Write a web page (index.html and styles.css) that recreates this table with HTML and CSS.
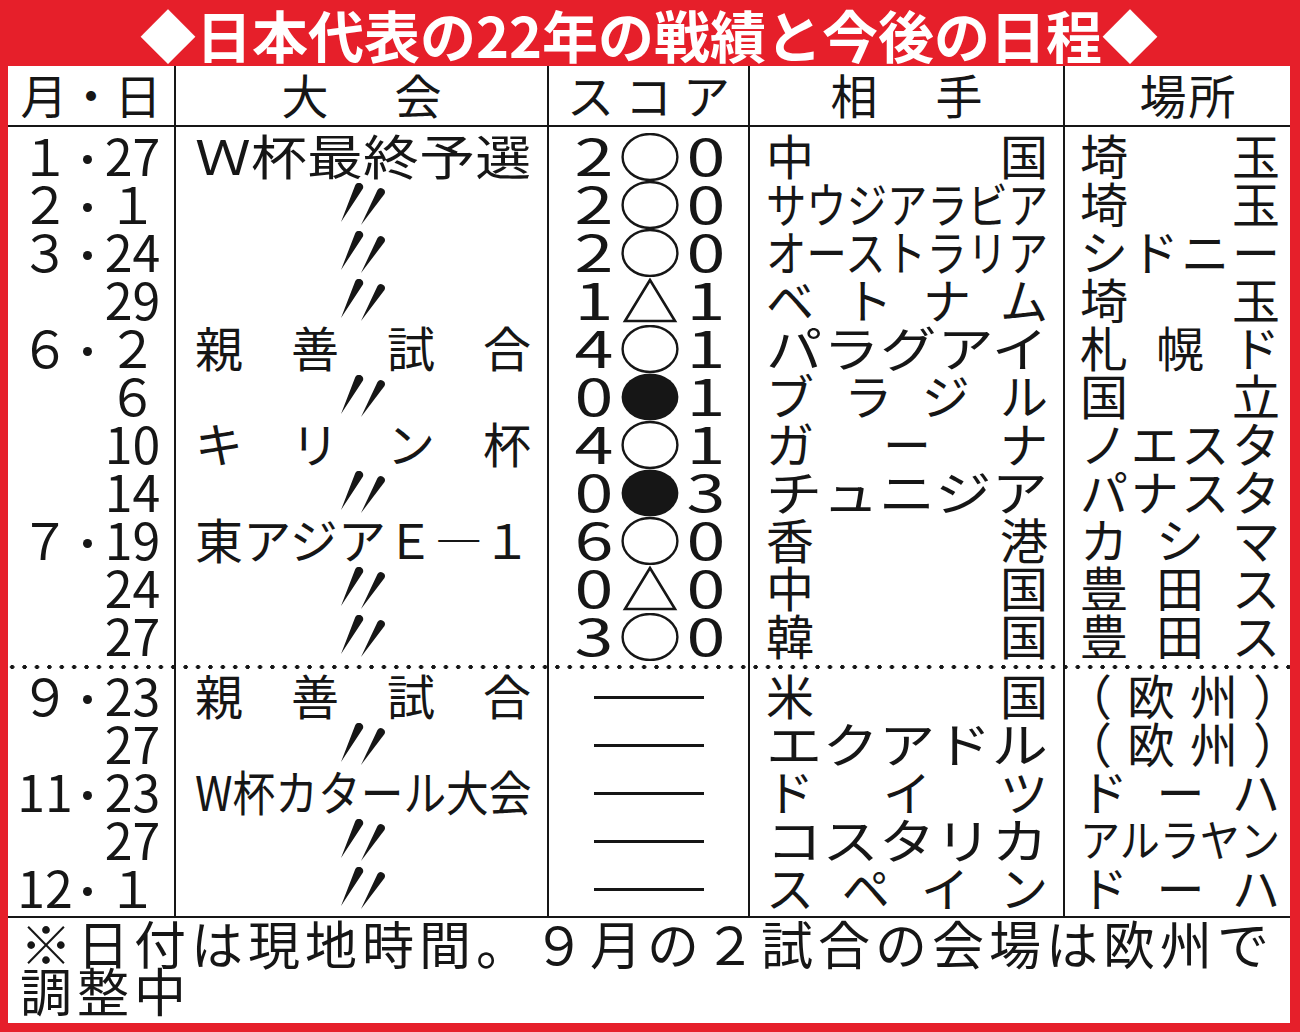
FILE: index.html
```html
<!DOCTYPE html>
<html lang="ja">
<head>
<meta charset="utf-8">
<title>日本代表の22年の戦績と今後の日程</title>
<link rel="stylesheet" href="styles.css">
</head>
<body>
<svg class="defs" aria-hidden="true">
  <symbol id="ditto" viewBox="0 0 50 44">
    <path d="M25.8 5.8 L4 39 L18.2 2.2 A4.1 4.1 0 0 1 25.8 5.8 Z"/>
    <path d="M47.5 11.1 L24 42 L40.5 6.9 A4.1 4.1 0 0 1 47.5 11.1 Z"/>
  </symbol>
  <symbol id="win" viewBox="0 0 62 48">
    <ellipse cx="31" cy="24" rx="27.4" ry="23" fill="none" stroke="#161616" stroke-width="2.4"/>
  </symbol>
  <symbol id="lose" viewBox="0 0 62 48">
    <ellipse cx="31" cy="24" rx="28.4" ry="23.6" fill="#161616"/>
  </symbol>
  <symbol id="draw" viewBox="0 0 62 48">
    <polygon points="31,3 6,44 56,44" fill="none" stroke="#161616" stroke-width="2.6"/>
  </symbol>
</svg>

<div class="frame">
  <h1 class="title">◆日本代表の22年の戦績と今後の日程◆</h1>
  <div class="sheet">
    <div class="cols head">
      <div class="h">月・日</div>
      <div class="h h-taikai">大会</div>
      <div class="h h-score">スコア</div>
      <div class="h h-aite">相手</div>
      <div class="h h-basho">場所</div>
    </div>

    <div class="cols blk blk1">
      <div class="col">
        <div class="c d"><span class="m">１</span><i class="pt"></i><span class="dd">27</span></div>
        <div class="c d"><span class="m">２</span><i class="pt"></i><span class="dd">１</span></div>
        <div class="c d"><span class="m">３</span><i class="pt"></i><span class="dd">24</span></div>
        <div class="c d"><span class="dd">29</span></div>
        <div class="c d"><span class="m">６</span><i class="pt"></i><span class="dd">２</span></div>
        <div class="c d"><span class="dd">６</span></div>
        <div class="c d"><span class="dd">10</span></div>
        <div class="c d"><span class="dd">14</span></div>
        <div class="c d"><span class="m">７</span><i class="pt"></i><span class="dd">19</span></div>
        <div class="c d"><span class="dd">24</span></div>
        <div class="c d"><span class="dd">27</span></div>
      </div>
      <div class="col tai">
        <div class="c j"><span class="fit k116">Ｗ杯最終予選</span></div>
        <div class="c dt"><svg><use href="#ditto"/></svg></div>
        <div class="c dt"><svg><use href="#ditto"/></svg></div>
        <div class="c dt"><svg><use href="#ditto"/></svg></div>
        <div class="c j">親善試合</div>
        <div class="c dt"><svg><use href="#ditto"/></svg></div>
        <div class="c j">キリン杯</div>
        <div class="c dt"><svg><use href="#ditto"/></svg></div>
        <div class="c j">東アジアＥ―１</div>
        <div class="c dt"><svg><use href="#ditto"/></svg></div>
        <div class="c dt"><svg><use href="#ditto"/></svg></div>
      </div>
      <div class="col">
        <div class="c s"><span class="n">2</span><svg><use href="#win"/></svg><span class="n">0</span></div>
        <div class="c s"><span class="n">2</span><svg><use href="#win"/></svg><span class="n">0</span></div>
        <div class="c s"><span class="n">2</span><svg><use href="#win"/></svg><span class="n">0</span></div>
        <div class="c s"><span class="n">1</span><svg><use href="#draw"/></svg><span class="n">1</span></div>
        <div class="c s"><span class="n">4</span><svg><use href="#win"/></svg><span class="n">1</span></div>
        <div class="c s"><span class="n">0</span><svg><use href="#lose"/></svg><span class="n">1</span></div>
        <div class="c s"><span class="n">4</span><svg><use href="#win"/></svg><span class="n">1</span></div>
        <div class="c s"><span class="n">0</span><svg><use href="#lose"/></svg><span class="n">3</span></div>
        <div class="c s"><span class="n">6</span><svg><use href="#win"/></svg><span class="n">0</span></div>
        <div class="c s"><span class="n">0</span><svg><use href="#draw"/></svg><span class="n">0</span></div>
        <div class="c s"><span class="n">3</span><svg><use href="#win"/></svg><span class="n">0</span></div>
      </div>
      <div class="col aite">
        <div class="c j">中国</div>
        <div class="c j"><span class="fit k84">サウジアラビア</span></div>
        <div class="c j"><span class="fit k84">オーストラリア</span></div>
        <div class="c j">ベトナム</div>
        <div class="c j"><span class="fit k117">パラグアイ</span></div>
        <div class="c j">ブラジル</div>
        <div class="c j">ガーナ</div>
        <div class="c j"><span class="fit k117">チュニジア</span></div>
        <div class="c j">香港</div>
        <div class="c j">中国</div>
        <div class="c j">韓国</div>
      </div>
      <div class="col basho">
        <div class="c j">埼玉</div>
        <div class="c j">埼玉</div>
        <div class="c j">シドニー</div>
        <div class="c j">埼玉</div>
        <div class="c j">札幌ド</div>
        <div class="c j">国立</div>
        <div class="c j">ノエスタ</div>
        <div class="c j">パナスタ</div>
        <div class="c j">カシマ</div>
        <div class="c j">豊田ス</div>
        <div class="c j">豊田ス</div>
      </div>
    </div>

    <div class="cols sep"><div></div><div></div><div></div><div></div><div></div></div>

    <div class="cols blk blk2">
      <div class="col">
        <div class="c d"><span class="m">９</span><i class="pt"></i><span class="dd">23</span></div>
        <div class="c d"><span class="dd">27</span></div>
        <div class="c d"><span class="m">11</span><i class="pt"></i><span class="dd">23</span></div>
        <div class="c d"><span class="dd">27</span></div>
        <div class="c d"><span class="m">12</span><i class="pt"></i><span class="dd">１</span></div>
      </div>
      <div class="col tai">
        <div class="c j">親善試合</div>
        <div class="c dt"><svg><use href="#ditto"/></svg></div>
        <div class="c j"><span class="fit k89">W杯カタール大会</span></div>
        <div class="c dt"><svg><use href="#ditto"/></svg></div>
        <div class="c dt"><svg><use href="#ditto"/></svg></div>
      </div>
      <div class="col">
        <div class="c s2"><span class="dash"></span></div>
        <div class="c s2"><span class="dash"></span></div>
        <div class="c s2"><span class="dash"></span></div>
        <div class="c s2"><span class="dash"></span></div>
        <div class="c s2"><span class="dash"></span></div>
      </div>
      <div class="col aite">
        <div class="c j">米国</div>
        <div class="c j"><span class="fit k117">エクアドル</span></div>
        <div class="c j">ドイツ</div>
        <div class="c j"><span class="fit k117">コスタリカ</span></div>
        <div class="c j">スペイン</div>
      </div>
      <div class="col basho">
        <div class="c spread"><span class="lp">（</span><span>欧</span><span>州</span><span class="rp">）</span></div>
        <div class="c spread"><span class="lp">（</span><span>欧</span><span>州</span><span class="rp">）</span></div>
        <div class="c j">ドーハ</div>
        <div class="c j small"><span class="fit k91">アルラヤン</span></div>
        <div class="c j">ドーハ</div>
      </div>
    </div>

    <p class="note">※日付は現地時間。９月の２試合の会場は欧州で<br>調整中</p>
  </div>
</div>
</body>
</html>
```

FILE: styles.css
```css
* {
  box-sizing: border-box;
  margin: 0;
  padding: 0;
}

html, body {
  width: 1300px;
  height: 1032px;
  overflow: hidden;
}

body {
  font-family: "Noto Sans CJK JP", "Noto Sans", sans-serif;
  color: #161616;
  background: #e61f2a;
}

.defs {
  display: block;
  width: 0;
  height: 0;
  overflow: hidden;
}

.frame {
  width: 1300px;
  height: 1032px;
  background: #e61f2a;
  padding: 0 10px 9px 8px;
  display: flex;
  flex-direction: column;
}

.title {
  height: 66px;
  padding-top: 2px;
  color: #fff;
  font-size: 56px;
  font-weight: 700;
  line-height: 64px;
  text-align: center;
  white-space: nowrap;
}

.sheet {
  flex: 1;
  background: #fff;
  display: flex;
  flex-direction: column;
}

.cols {
  display: grid;
  grid-template-columns: 168px 373px 201px 315px 225px;
}

.cols > * {
  border-right: 2px solid #161616;
}

.cols > *:last-child {
  border-right: 0;
}

/* header */
.head {
  height: 61px;
  border-bottom: 2px solid #161616;
}

.h {
  display: flex;
  align-items: center;
  justify-content: center;
  padding-bottom: 5px;
  font-size: 47px;
  line-height: 1;
  white-space: nowrap;
}

.h-taikai {
  letter-spacing: 66px;
  padding-left: 66px;
}

.h-aite {
  letter-spacing: 58px;
  padding-left: 58px;
}

.h-score {
  letter-spacing: 11px;
  padding-left: 11px;
}

.h-basho {
  padding-left: 22px;
  letter-spacing: 2px;
}

/* body blocks */
.blk1 .col {
  padding-top: 6px;
}

.blk2 {
  border-bottom: 2px solid #161616;
}

.blk2 .col {
  padding-bottom: 3px;
}

.c {
  height: 48px;
  font-size: 48px;
  line-height: 42px;
}

.tai .c {
  padding: 0 16px 0 19px;
}

.aite .c {
  padding: 0 15px 0 16px;
}

.basho .c {
  padding: 0 10px 0 15px;
}

.j {
  text-align: justify;
  text-align-last: justify;
}

.spread {
  display: flex;
  justify-content: space-between;
}

.lp {
  margin-left: -16px;
}

.rp {
  margin-right: -21px;
}

.fit {
  display: block;
  width: calc(100% / var(--k));
  transform: scaleX(var(--k));
  transform-origin: 0 50%;
  text-align: justify;
  text-align-last: justify;
  white-space: nowrap;
}

.k84 { --k: 0.84; }
.k89 { --k: 0.89; }
.k91 { --k: 0.91; }
.k116 { --k: 1.163; }
.k117 { --k: 1.17; }

.fit.k116, .fit.k117 {
  white-space: normal;
}

.small {
  font-size: 44px;
}

/* date column */
.d {
  display: flex;
  justify-content: flex-end;
  padding-right: 14px;
  font-size: 50px;
  white-space: nowrap;
}

.m {
  width: 48px;
  display: flex;
  justify-content: center;
}

.pt {
  width: 36px;
  display: flex;
  align-items: center;
  justify-content: center;
}

.pt::before {
  content: "";
  width: 9px;
  height: 9px;
  margin-top: 4px;
  border-radius: 50%;
  background: #161616;
}

.dd {
  width: 55px;
  display: flex;
  justify-content: center;
}

/* ditto marks */
.dt {
  display: flex;
  align-items: center;
  justify-content: center;
}

.tai .dt {
  padding: 0;
}

.dt svg {
  width: 50px;
  height: 44px;
  fill: #161616;
}

/* score column */
.s {
  display: grid;
  grid-template-columns: 50px 62px 50px;
  padding-left: 20px;
}

.s svg {
  width: 62px;
  height: 48px;
  align-self: center;
}

.n {
  display: block;
  height: 48px;
  font-size: 50px;
  line-height: 42px;
  text-align: center;
  transform: scaleX(1.4);
}

.s2 {
  display: flex;
  align-items: center;
  justify-content: center;
}

.dash {
  display: block;
  width: 110px;
  height: 3px;
  background: #161616;
}

/* dotted separator */
.sep {
  height: 12px;
  background-image: radial-gradient(circle, #161616 0 1.9px, transparent 2.4px);
  background-size: 12.4px 12px;
  background-position: -2px 0;
  background-repeat: repeat-x;
}

/* footnote */
.note {
  flex: 1;
  padding: 1px 0 0 12px;
  font-size: 52px;
  line-height: 47px;
  letter-spacing: 5px;
  white-space: nowrap;
}
```
